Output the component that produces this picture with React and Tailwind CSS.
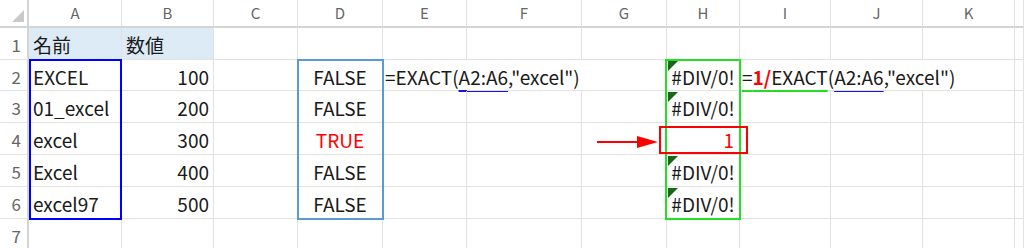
import React from 'react'

const FONT = { fontFamily: '"Noto Sans CJK JP", "Noto Sans", sans-serif' }

const COLS = ['A', 'B', 'C', 'D', 'E', 'F', 'G', 'H', 'I', 'J', 'K', '']

const ROWS = [
  { A: '名前', B: '数値' },
  { A: 'EXCEL', B: '100', D: 'FALSE', E: 'f1', H: 'err', I: 'f2' },
  { A: '01_excel', B: '200', D: 'FALSE', H: 'err' },
  { A: 'excel', B: '300', D: 'TRUE', H: 'one' },
  { A: 'Excel', B: '400', D: 'FALSE', H: 'err' },
  { A: 'excel97', B: '500', D: 'FALSE', H: 'err' },
  {},
]

function ErrFlag() {
  return <span className="absolute left-px top-px w-0 h-0 border-t-[10px] border-t-[#1a661a] border-r-[10px] border-r-transparent" />
}

const UL = 'underline decoration-2 underline-offset-[5px] [text-decoration-skip-ink:none]'

function Formula1() {
  return (
    <span className="whitespace-nowrap">
      =EXACT(<span className={`${UL} decoration-[#1010ff]`}>A2:A6</span>,"excel")
    </span>
  )
}

function Formula2() {
  return (
    <span className="whitespace-nowrap">
      <span className={`${UL} decoration-[#22dd22]`}>
        =<span className="text-[#ff0000] font-bold">1/</span>EXACT
      </span>
      (<span className={`${UL} decoration-[#1010ff]`}>A2:A6</span>,"excel")
    </span>
  )
}

function Cell({ col, row, value }) {
  const noRight = row === 2 && (col === 'E' || col === 'F' || col === 'I' || col === 'J')
  const bg = row === 1 && (col === 'A' || col === 'B') ? 'bg-[#ddebf7]' : ''
  let content = null
  let align = 'justify-start pl-[4px]'
  if (value === 'f1' || value === 'f2') {
    content = value === 'f1' ? <Formula1 /> : <Formula2 />
    align = 'justify-start pl-[2px]'
  } else if (value === 'err') {
    content = <><ErrFlag /><span>#DIV/0!</span></>
    align = 'justify-center'
  } else if (value === 'one') {
    content = <span className="text-[#ff0000]">1</span>
    align = 'justify-end pr-[5px]'
  } else if (value === 'TRUE') {
    content = <span className="text-[#ff0000]">TRUE</span>
    align = 'justify-center'
  } else if (value === 'FALSE') {
    content = value
    align = 'justify-center'
  } else if (value && /^\d+$/.test(value)) {
    content = value
    align = 'justify-end pr-[4px]'
  } else if (value) {
    content = value
  }
  return (
    <div className={`relative flex items-center pt-[4px] border-b border-[#e1e1e1] ${noRight ? '' : 'border-r'} ${align} ${bg}`}>
      {content}
    </div>
  )
}

export default function App() {
  return (
    <div className="w-[1024px] h-[248px] overflow-hidden bg-white text-[#1a1a1a] text-[19px]" style={FONT}>
      <div className="relative grid grid-cols-[29px_93px_92px_84px_85px_84px_115px_85px_73px_91px_92px_92px_1fr] grid-rows-[28px_32px_31px_32px_32px_32px_32px_32px]">
        {/* header row */}
        <div className="relative border-b-2 border-r-2 border-[#d4d4d4] bg-white">
          <span className="absolute right-[3px] bottom-[4px] w-0 h-0 border-b-[12px] border-b-[#c9c9c9] border-l-[12px] border-l-transparent" />
        </div>
        {COLS.map((c, i) => (
          <div key={i} className="flex items-center justify-center border-b-2 border-r border-[#d4d4d4] border-r-[#e1e1e1] text-[15px] text-[#666]">
            {c}
          </div>
        ))}
        {ROWS.map((r, ri) => (
          <React.Fragment key={ri}>
            <div className="flex items-center justify-end pr-[6px] pt-[3px] border-r-2 border-r-[#d4d4d4] border-b border-b-[#e1e1e1] text-[17px] text-[#666]">
              {ri + 1}
            </div>
            {COLS.map((c, ci) => (
              <Cell key={ci} col={c} row={ri + 1} value={r[c]} />
            ))}
          </React.Fragment>
        ))}

        {/* range highlights and annotation, drawn over the sheet */}
        <div className="absolute left-[29px] top-[59px] w-[93px] h-[161px] border-2 border-[#0000ff]" />
        <div className="absolute left-[297px] top-[59px] w-[87px] h-[161px] border-2 border-[#5b9bd5]" />
        <div className="absolute left-[665px] top-[59px] w-[76px] h-[161px] border-2 border-[#22e022]" />
        <div className="absolute left-[659px] top-[126px] w-[89px] h-[28px] border-2 border-[#ff0000]" />
        <div className="absolute left-[597px] top-[141px] w-[42px] h-[2px] bg-[#ff0000]" />
        <div className="absolute left-[637px] top-[136px] w-0 h-0 border-l-[21px] border-l-[#ff0000] border-y-[6px] border-y-transparent" />
      </div>
    </div>
  )
}
